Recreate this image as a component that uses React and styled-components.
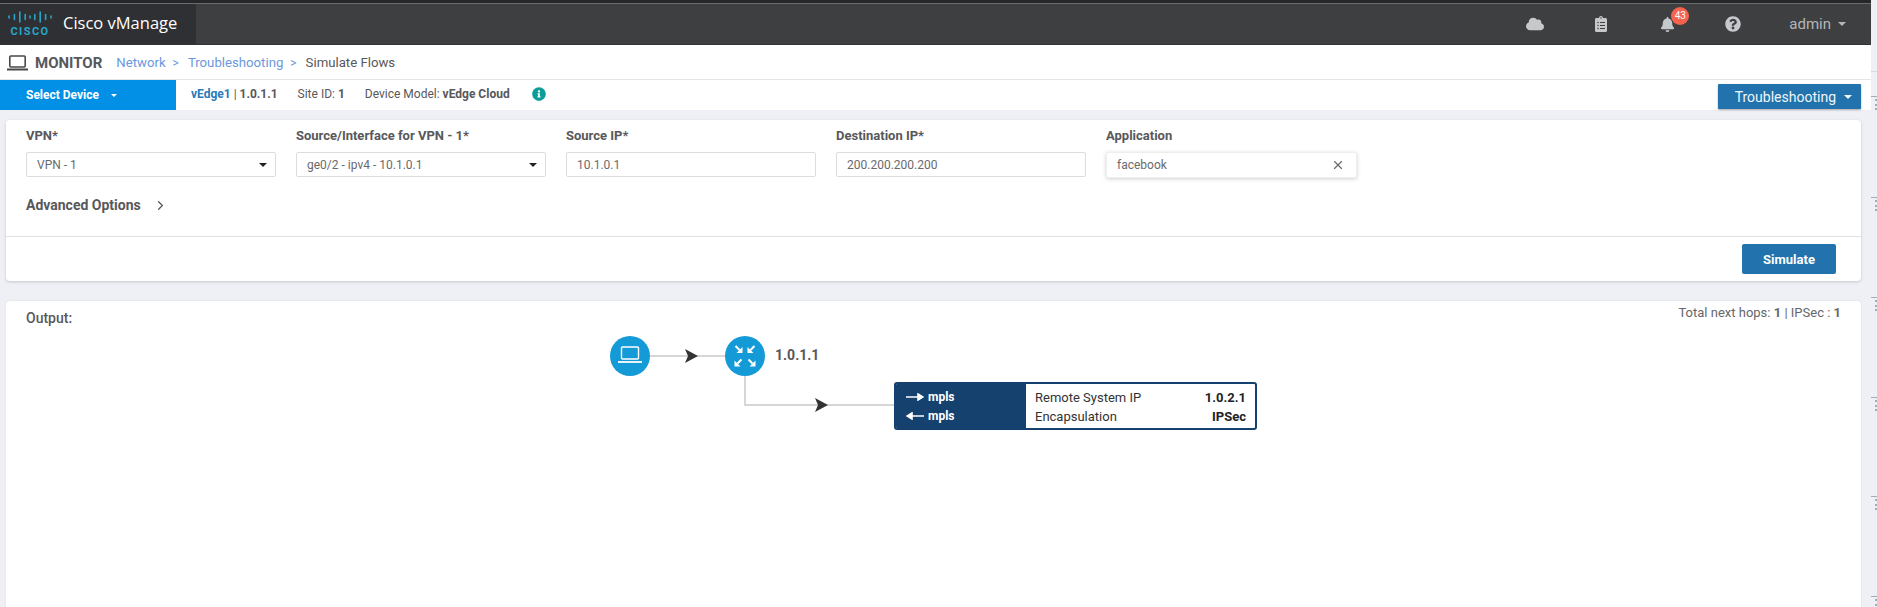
import React from "react";
import styled, { createGlobalStyle } from "styled-components";
import { FaCloud, FaClipboardList, FaBell, FaQuestionCircle, FaInfoCircle } from "react-icons/fa";
import { FiChevronRight, FiX } from "react-icons/fi";

const Global = createGlobalStyle`
  html, body { margin: 0; padding: 0; height: 607px; overflow: hidden; background: #eef0f5; }
  body { font-family: Roboto, "Liberation Sans", sans-serif; color: #58585b; font-size: 12px; }
  * { box-sizing: border-box; }
`;

const Page = styled.div`
  position: relative;
  width: 1877px;
  height: 607px;
  overflow: hidden;
  display: flex;
  flex-direction: column;
  background: #eef0f5;
`;
const TopEdge = styled.div`
  height: 4px;
  flex: none;
  background: linear-gradient(#262729 0 3px, #6a6b6d 3px);
  margin-right: 6px;
`;
const TopBar = styled.header`
  height: 41px;
  flex: none;
  background: #3e3f41;
  display: flex;
  align-items: center;
  justify-content: space-between;
  margin-right: 6px;
  border-bottom: 1px solid #333;
`;
const Brand = styled.div`
  width: 196px;
  height: 100%;
  background: #2f3033;
  display: flex;
  align-items: center;
  gap: 11px;
  padding: 0 0 1px 8px;
`;
const BrandName = styled.span`
  font-family: "Open Sans", sans-serif;
  color: #fff;
  font-size: 16.5px;
  margin-top: -3px;
`;
const TopActions = styled.div`
  display: flex;
  align-items: center;
  gap: 46px;
  color: #c4c5c7;
  padding-right: 25px;
`;
const TopIcon = styled.span`
  position: relative;
  display: flex;
  justify-content: center;
  width: 20px;
  font-size: ${(p) => p.$s}px;
  color: #c6c9cc;
`;
const Badge = styled.span`
  position: absolute;
  top: -10px;
  left: 14px;
  width: 18px;
  height: 18px;
  border-radius: 50%;
  background: #f5624e;
  color: #fff;
  font-size: 10px;
  line-height: 18px;
  text-align: center;
`;
const Admin = styled.span`
  display: flex;
  align-items: center;
  gap: 7px;
  color: #b5b6b8;
  font-size: 15px;
`;
const Caret = styled.i`
  width: 0;
  height: 0;
  border-left: ${(p) => p.$s || 4}px solid transparent;
  border-right: ${(p) => p.$s || 4}px solid transparent;
  border-top: ${(p) => p.$s || 4}px solid ${(p) => p.$c || "currentColor"};
`;
const CrumbRow = styled.nav`
  height: 35px;
  flex: none;
  background: #fff;
  margin-right: 6px;
  border-bottom: 1px solid #e4e5e7;
  display: flex;
  align-items: center;
  padding: 1px 0 0 7px;
  font-size: 13.2px;
`;
const Monitor = styled.strong`
  font-size: 15px;
  font-weight: 700;
  color: #58585b;
  margin: 0 14px 0 7px;
`;
const Crumb = styled.span`
  color: #6b98dc;
`;
const Sep = styled.span`
  color: #6b98dc;
  margin: 0 9px 0 7px;
  font-size: 12px;
`;
const DeviceRow = styled.div`
  height: 30px;
  flex: none;
  background: #fff;
  margin-right: 6px;
  display: flex;
  align-items: center;
  font-size: 12px;
`;
const SelectDevice = styled.div`
  width: 176px;
  height: 100%;
  background: #0190e6;
  color: #fff;
  font-weight: 700;
  font-size: 12px;
  padding-left: 26px;
  display: flex;
  align-items: center;
  gap: 12px;
`;
const DeviceInfo = styled.div`
  display: flex;
  align-items: center;
  margin-left: 15px;
  gap: 20px;
  flex: 1;
  padding-bottom: 2px;
  color: #58585b;
`;
const DeviceName = styled.span`
  font-weight: 700;
  color: #2a7ab8;
`;
const Info = styled.span`
  display: flex;
  color: #0c9d9a;
  font-size: 14px;
  margin-left: 2px;
`;
const TroubleBtn = styled.button`
  width: 143px;
  height: 25px;
  border: 0;
  margin: 3px 10px 0 0;
  background: #2273ad;
  color: #f0f5f9;
  font: 400 14px Roboto, sans-serif;
  display: flex;
  align-items: center;
  justify-content: flex-end;
  gap: 8px;
  padding-right: 9px;
  box-shadow: 0 1px 2px rgba(0,0,0,.35);
  border-radius: 1px;
  white-space: nowrap;
`;
const Content = styled.main`
  flex: 1;
  display: flex;
  flex-direction: column;
  gap: 20px;
  padding: 10px 16px 0 6px;
  min-height: 0;
`;
const FormCard = styled.section`
  height: 161px;
  flex: none;
  background: #fff;
  border-radius: 4px;
  box-shadow: 0 1px 3px rgba(0,0,0,.18);
  display: flex;
  flex-direction: column;
`;
const FormBody = styled.div`
  height: 117px;
  flex: none;
  padding: 8px 20px 0;
  border-bottom: 1px solid #dfe0e2;
`;
const Fields = styled.div`
  display: flex;
  gap: 20px;
`;
const Field = styled.label`
  display: flex;
  flex-direction: column;
  gap: 8px;
  width: ${(p) => p.$w}px;
`;
const FieldLabel = styled.span`
  font-size: 13px;
  font-weight: 700;
  line-height: 16px;
  color: #58585b;
`;
const InputBox = styled.div`
  height: 25px;
  border: 1px solid #dcdde0;
  border-radius: 2px;
  background: #fff;
  display: flex;
  align-items: center;
  justify-content: space-between;
  padding: 0 8px 0 10px;
  font-size: 12px;
  color: #6a6a6d;
  ${(p) => p.$raised && "border-color:#eee; box-shadow: 0 1px 4px rgba(0,0,0,.18); height: 26px; padding-right: 11px;"}
`;
const Advanced = styled.div`
  display: flex;
  align-items: center;
  gap: 12px;
  margin-top: 19px;
  font-size: 14px;
  font-weight: 700;
  color: #58585b;
`;
const FormFoot = styled.div`
  flex: 1;
  display: flex;
  align-items: center;
  justify-content: flex-end;
  padding-right: 25px;
`;
const SimulateBtn = styled.button`
  width: 94px;
  height: 30px;
  border: 0;
  border-radius: 2px;
  background: #2273ad;
  color: #fff;
  font: 700 13px Roboto, sans-serif;
`;
const OutputCard = styled.section`
  position: relative;
  flex: 1;
  background: #fff;
  border-radius: 4px 4px 0 0;
  box-shadow: 0 0 2px rgba(0,0,0,.1);
  padding: 9px 20px;
`;
const OutputLabel = styled.div`
  font-size: 14px;
  font-weight: 500;
  color: #58585b;
`;
const Totals = styled.div`
  position: absolute;
  top: 4px;
  right: 20px;
  font-size: 13px;
  color: #66666a;
`;
const Diagram = styled.svg`
  position: absolute;
  left: 0;
  top: 0;
`;
const NodeLabel = styled.div`
  position: absolute;
  left: 769px;
  top: 46px;
  font-size: 14px;
  font-weight: 700;
  color: #58585b;
`;
const HopCard = styled.div`
  position: absolute;
  left: 888px;
  top: 81px;
  width: 363px;
  height: 48px;
  border: 2px solid #15416f;
  border-radius: 3px;
  display: flex;
  overflow: hidden;
  background: #fff;
`;
const HopLeft = styled.div`
  width: 130px;
  background: #15416f;
  color: #fff;
  font-weight: 700;
  font-size: 12px;
  display: flex;
  flex-direction: column;
  justify-content: center;
  gap: 4px;
  padding: 1px 0 0 10px;
`;
const HopLine = styled.div`
  display: flex;
  align-items: center;
  gap: 4px;
  line-height: 15px;
`;
const HopRight = styled.div`
  flex: 1;
  display: flex;
  flex-direction: column;
  justify-content: center;
  gap: 4px;
  padding: 1px 9px 0 9px;
  font-size: 13px;
  color: #333;
`;
const HopRow = styled.div`
  display: flex;
  justify-content: space-between;
  line-height: 15px;
`;
const HopValue = styled.b`
  color: #222;
`;
const Tick = styled.i`
  position: absolute;
  left: 1871px;
  width: 6px;
  height: 14px;
  top: ${(p) => p.$y}px;
  border-top: 1px solid #a4aab6;
  &::after {
    content: "";
    position: absolute;
    right: 0;
    top: 2px;
    height: 11px;
    border-right: 2px dotted #a4aab6;
  }
`;
const RightRule = styled.i`
  position: absolute;
  left: 1871px;
  top: 71px;
  width: 6px;
  height: 1px;
  background: #d5d8df;
`;

const Arrow = ({ d }) => (
  <svg width="18" height="8" viewBox="0 0 18 8">
    {d > 0 ? (
      <path d="M0 4H14M12 1L17 4L12 7Z" stroke="#fff" strokeWidth="1.6" fill="#fff" />
    ) : (
      <path d="M18 4H4M6 1L1 4L6 7Z" stroke="#fff" strokeWidth="1.6" fill="#fff" />
    )}
  </svg>
);

const CiscoLogo = () => (
  <svg width="44" height="26" viewBox="0 0 44 26">
    <g stroke="#27a5c8" strokeWidth="1.6" strokeLinecap="round">
      <path d="M1 5v2M6.4 3.5v5M11.8 1v10M17.2 3.5v5M22 5v2M26.8 3.5v5M32.2 1v10M37.6 3.5v5M43 5v2" />
    </g>
    <text x="22" y="24" textAnchor="middle" fill="#27a5c8" fontFamily="Roboto, sans-serif" fontWeight="700" fontSize="11" letterSpacing="1.4">CISCO</text>
  </svg>
);

const LaptopGlyph = () => (
  <svg width="21" height="16" viewBox="0 0 21 16" fill="none" stroke="#48484a" strokeWidth="1.6">
    <rect x="2.8" y="1" width="15.4" height="11" rx="1" />
    <path d="M0 14.5H21" strokeWidth="2" />
  </svg>
);

const fieldData = [
  { label: "VPN*", value: "VPN - 1", select: true },
  { label: "Source/Interface for VPN - 1*", value: "ge0/2 - ipv4 - 10.1.0.1", select: true },
  { label: "Source IP*", value: "10.1.0.1" },
  { label: "Destination IP*", value: "200.200.200.200" },
];

export default function App() {
  return (
    <Page>
      <Global />
      <TopEdge />
      <TopBar>
        <Brand>
          <CiscoLogo />
          <BrandName>Cisco vManage</BrandName>
        </Brand>
        <TopActions>
          <TopIcon $s={18}><FaCloud /></TopIcon>
          <TopIcon $s={16}><FaClipboardList /></TopIcon>
          <TopIcon $s={15}>
            <FaBell />
            <Badge>43</Badge>
          </TopIcon>
          <TopIcon $s={16}><FaQuestionCircle /></TopIcon>
          <Admin>admin <Caret /></Admin>
        </TopActions>
      </TopBar>
      <CrumbRow>
        <LaptopGlyph />
        <Monitor>MONITOR</Monitor>
        <Crumb>Network</Crumb>
        <Sep>&gt;</Sep>
        <Crumb>Troubleshooting</Crumb>
        <Sep>&gt;</Sep>
        <span>Simulate Flows</span>
      </CrumbRow>
      <DeviceRow>
        <SelectDevice>Select Device <Caret $s={3} /></SelectDevice>
        <DeviceInfo>
          <span><DeviceName>vEdge1</DeviceName> | <b>1.0.1.1</b></span>
          <span>Site ID: <b>1</b></span>
          <span>Device Model: <b>vEdge Cloud</b></span>
          <Info><FaInfoCircle /></Info>
        </DeviceInfo>
        <TroubleBtn>Troubleshooting <Caret /></TroubleBtn>
      </DeviceRow>
      <Content>
        <FormCard>
          <FormBody>
            <Fields>
              {fieldData.map((f) => (
                <Field key={f.label} $w={250}>
                  <FieldLabel>{f.label}</FieldLabel>
                  <InputBox>
                    {f.value}
                    {f.select && <Caret $c="#222" />}
                  </InputBox>
                </Field>
              ))}
              <Field $w={251}>
                <FieldLabel>Application</FieldLabel>
                <InputBox $raised>
                  facebook
                  <FiX size={14} />
                </InputBox>
              </Field>
            </Fields>
            <Advanced>Advanced Options <FiChevronRight size={15} /></Advanced>
          </FormBody>
          <FormFoot>
            <SimulateBtn>Simulate</SimulateBtn>
          </FormFoot>
        </FormCard>
        <OutputCard>
          <OutputLabel>Output:</OutputLabel>
          <Totals>Total next hops: <b>1</b> | IPSec : <b>1</b></Totals>
          <Diagram width="900" height="150" viewBox="0 0 900 150">
            <path d="M640 55H725M739 75V104H889" stroke="#c9c9c9" strokeWidth="1.5" fill="none" />
            <path d="M679 48L692 55L679 62L682 55Z" fill="#333" />
            <path d="M809 97L822 104L809 111L812 104Z" fill="#333" />
            <circle cx="624" cy="55" r="20" fill="#149ad6" />
            <circle cx="739" cy="55" r="20" fill="#149ad6" />
            <g fill="none" stroke="#fff" strokeWidth="1.4">
              <rect x="615.5" y="46" width="17" height="12" rx="1" />
              <path d="M612 61H636" strokeWidth="1.8" />
            </g>
            <g stroke="#fff" strokeWidth="2" fill="none">
              <path d="M729.5 45L733.5 49M748.5 45L744.5 49M735.5 58.5L731.5 62.5M742.5 58.5L746.5 62.5" />
            </g>
            <g fill="#fff">
              <path d="M736.5 52V46L730.5 52ZM741.5 52V46L747.5 52ZM728.5 65.5V59.5L734.5 65.5ZM749.5 65.5V59.5L743.5 65.5Z" />
            </g>
          </Diagram>
          <NodeLabel>1.0.1.1</NodeLabel>
          <HopCard>
            <HopLeft>
              <HopLine><Arrow d={1} /> mpls</HopLine>
              <HopLine><Arrow d={-1} /> mpls</HopLine>
            </HopLeft>
            <HopRight>
              <HopRow>Remote System IP <HopValue>1.0.2.1</HopValue></HopRow>
              <HopRow>Encapsulation <HopValue>IPSec</HopValue></HopRow>
            </HopRight>
          </HopCard>
        </OutputCard>
      </Content>
      <RightRule />
      {[96, 197, 297, 397, 496, 596].map((y) => <Tick key={y} $y={y} />)}
    </Page>
  );
}
